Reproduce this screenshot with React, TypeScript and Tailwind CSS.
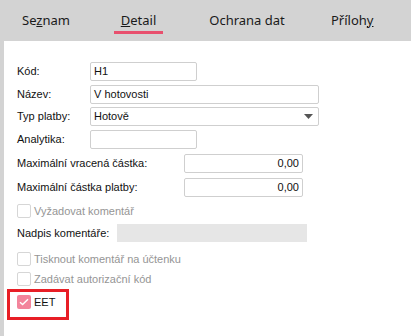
import React from 'react';

const tabFont = { fontFamily: '"Noto Sans", "Open Sans", sans-serif' };
const formFont = { fontFamily: '"Liberation Sans", Arial, sans-serif' };

function Input({ w, value, right, select }: { w: string; value?: string; right?: boolean; select?: boolean }) {
  return (
    <div
      className={`${w} h-[19px] border border-[#cfcfcf] rounded-[2px] bg-white flex items-center px-[3px] text-[11px] text-[#111] ${
        right ? 'justify-end' : 'justify-between'
      }`}
    >
      <span>{value}</span>
      {select && (
        <svg width="9" height="6" viewBox="0 0 9 6" className="mr-[2px]">
          <path d="M0 0h9L4.5 5z" fill="#555" />
        </svg>
      )}
    </div>
  );
}

function Check({ label, checked, disabled }: { label: string; checked?: boolean; disabled?: boolean }) {
  return (
    <div className="h-[14px] flex items-center gap-[3px] whitespace-nowrap">
      {checked ? (
        <div className="w-[14px] h-[14px] rounded-[2px] bg-[#f3849b] flex items-center justify-center">
          <svg width="10" height="8" viewBox="0 0 10 8">
            <path d="M1 4.2l2.6 2.4L9 1.2" stroke="#fff" strokeWidth="1.4" fill="none" />
          </svg>
        </div>
      ) : (
        <div className="w-[14px] h-[14px] rounded-[2px] border border-[#d6d6d6] bg-white" />
      )}
      <span className={`text-[11px] leading-none ${disabled ? 'text-[#959595]' : 'text-[#111]'}`}>{label}</span>
    </div>
  );
}

export default function App() {
  return (
    <div className="w-[411px] h-[336px] bg-[#d3d3d3] flex flex-col overflow-hidden">
      {/* TABS */}
      <div className="h-[41px] shrink-0 flex text-[13px] text-[#1a1a1a]" style={tabFont}>
        <div className="w-[114px] pl-[22px] flex items-center">
          <span>
            Se<span className="underline">z</span>nam
          </span>
        </div>
        <div className="w-[49px] relative flex items-center justify-center">
          <span>
            <span className="underline">D</span>etail
          </span>
          <div className="absolute left-0 right-0 top-[31px] h-[3px] bg-[#e8506e]" />
        </div>
        <div className="w-[168px] flex items-center justify-center">
          <span>Ochrana dat</span>
        </div>
        <div className="flex items-center">
          <span>
            Příloh<span className="underline">y</span>
          </span>
        </div>
      </div>

      {/* PANEL */}
      <div className="flex-1 ml-[4px] bg-white flex flex-col pt-[21px] text-[11px] text-[#111] whitespace-nowrap" style={formFont}>
        <div className="h-[19px] flex items-center pl-[13px]">
          <span className="w-[73px]">Kód:</span>
          <Input w="w-[107px]" value="H1" />
        </div>
        <div className="h-[19px] flex items-center pl-[13px] mt-[4px]">
          <span className="w-[73px]">Název:</span>
          <Input w="w-[229px]" value="V hotovosti" />
        </div>
        <div className="h-[19px] flex items-center pl-[13px] mt-[3px]">
          <span className="w-[73px]">Typ platby:</span>
          <Input w="w-[229px]" value="Hotově" select />
        </div>
        <div className="h-[19px] flex items-center pl-[13px] mt-[4px]">
          <span className="w-[73px]">Analytika:</span>
          <Input w="w-[107px]" />
        </div>
        <div className="h-[19px] flex items-center pl-[13px] mt-[5px]">
          <span className="w-[167px]">Maximální vracená částka:</span>
          <Input w="w-[119px]" value="0,00" right />
        </div>
        <div className="h-[19px] flex items-center pl-[13px] mt-[5px]">
          <span className="w-[167px]">Maximální částka platby:</span>
          <Input w="w-[119px]" value="0,00" right />
        </div>
        <div className="pl-[13px] mt-[7px]">
          <Check label="Vyžadovat komentář" disabled />
        </div>
        <div className="h-[18px] flex items-center pl-[13px] mt-[6px]">
          <span className="w-[100px]">Nadpis komentáře:</span>
          <div className="w-[190px] h-[18px] bg-[#e6e6e6]" />
        </div>
        <div className="pl-[13px] mt-[10px]">
          <Check label="Tisknout komentář na účtenku" disabled />
        </div>
        <div className="pl-[13px] mt-[6px]">
          <Check label="Zadávat autorizační kód" disabled />
        </div>
        <div className="ml-[3px] mt-[3px] w-[62px] h-[31px] border-[3px] border-[#e81e26] pl-[7px] pt-[3px]">
          <Check label="EET" checked />
        </div>
      </div>
    </div>
  );
}
